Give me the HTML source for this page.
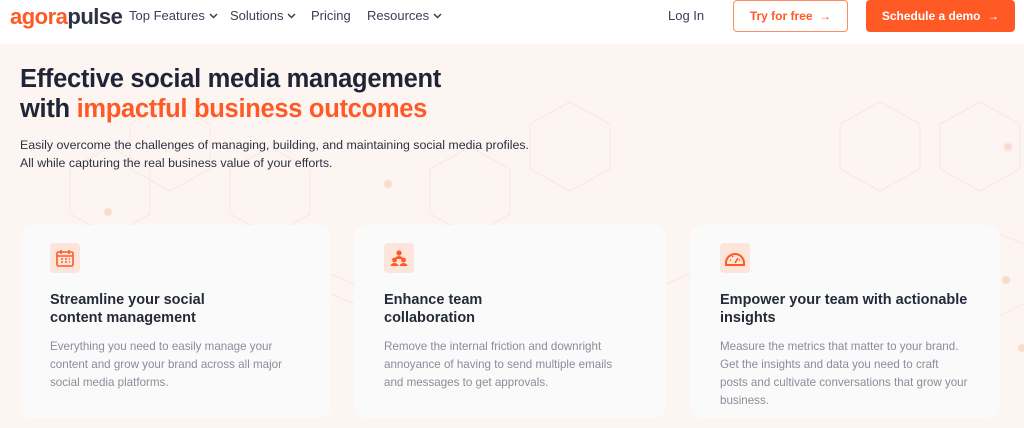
<!DOCTYPE html>
<html><head><meta charset="utf-8"><style>
*{margin:0;padding:0;box-sizing:border-box}
body{width:1024px;height:428px;overflow:hidden;background:#fdf5f2;font-family:"Liberation Sans",sans-serif;position:relative}
.hdr{position:absolute;left:0;top:0;width:1024px;height:44px;background:#fff}
.logo{position:absolute;left:10px;top:4px;font-size:22px;font-weight:bold;letter-spacing:-0.5px}
.nav{position:absolute;top:8px;font-size:13px;color:#3a3f55}
.nav svg{margin-left:4px;vertical-align:1px}
.btn{position:absolute;top:0;height:32px;border-radius:4px;font-size:12px;font-weight:bold;display:flex;align-items:center;justify-content:center}
h1{position:absolute;left:20px;top:64px;font-size:25.5px;line-height:30px;color:#1f2537;font-weight:bold;letter-spacing:-0.3px}
.p{position:absolute;left:20px;top:136px;font-size:12.4px;line-height:18px;color:#2d3142}
.card{position:absolute;top:225px;height:193px;background:#fafafa;border-radius:12px}
.ic{position:absolute;left:30px;top:18px;width:30px;height:30px;background:#fde5db;border-radius:4px;display:flex;align-items:center;justify-content:center}
.ct{position:absolute;left:30px;top:66px;font-size:14.5px;line-height:18px;font-weight:bold;color:#252a3a}
.cd{position:absolute;left:30px;top:113px;font-size:11.6px;line-height:18px;color:#8a8d9a}
</style></head><body>
<svg style="position:absolute;left:0;top:44px" width="1024" height="384" fill="none" stroke="#fae6de" stroke-width="1">
<path d="M130 80 L170 58 L210 80 L210 125 L170 147 L130 125Z M230 125 L270 103 L310 125 L310 170 L270 192 L230 170Z M430 125 L470 103 L510 125 L510 170 L470 192 L430 170Z M530 80 L570 58 L610 80 L610 125 L570 147 L530 125Z M70 125 L110 103 L150 125 L150 170 L110 192 L70 170Z M840 80 L880 58 L920 80 L920 125 L880 147 L840 125Z M940 80 L980 58 L1020 80 L1020 125 L980 147 L940 125Z M940 300 L1024 260 M331 230 L354 240 M331 250 L354 260 M666 240 L690 230 M1000 190 L1024 200"/>
<circle cx="108" cy="168" r="4" fill="#f9dccf"/><circle cx="388" cy="140" r="4" fill="#f9dccf"/><circle cx="1008" cy="103" r="4" fill="#f9dccf"/><circle cx="1006" cy="236" r="4" fill="#f9dccf"/><circle cx="1022" cy="304" r="4" fill="#f9dccf"/>
</svg>
<div class="hdr">
<div class="logo"><span style="color:#ff5a26">agora</span><span style="color:#2d3142">pulse</span></div>
<div class="nav" style="left:129px">Top Features<svg width="9" height="6" viewBox="0 0 9 6" fill="none" stroke="#3a3f55" stroke-width="1.5"><path d="M1 1l3.5 3.5L8 1"/></svg></div>
<div class="nav" style="left:230px">Solutions<svg width="9" height="6" viewBox="0 0 9 6" fill="none" stroke="#3a3f55" stroke-width="1.5"><path d="M1 1l3.5 3.5L8 1"/></svg></div>
<div class="nav" style="left:311px">Pricing</div>
<div class="nav" style="left:367px">Resources<svg width="9" height="6" viewBox="0 0 9 6" fill="none" stroke="#3a3f55" stroke-width="1.5"><path d="M1 1l3.5 3.5L8 1"/></svg></div>
<div class="nav" style="left:668px">Log In</div>
<div class="btn" style="left:733px;width:115px;border:1px solid #ff8a63;color:#ff5a26">Try for free &nbsp;→</div>
<div class="btn" style="left:866px;width:149px;background:#ff5a26;color:#fff">Schedule a demo &nbsp;→</div>
</div>
<h1>Effective social media management<br>with <span style="color:#ff5a26">impactful business outcomes</span></h1>
<div class="p">Easily overcome the challenges of managing, building, and maintaining social media profiles.<br>All while capturing the real business value of your efforts.</div>
<div class="card" style="left:20px;width:311px">
<div class="ic"><svg width="20" height="20" viewBox="0 0 20 20" fill="none" stroke="#ff5a26" stroke-width="1.6"><rect x="2" y="4" width="16" height="14" rx="1.5"/><path d="M2 8h16M6 2v4M14 2v4M6 11h2M10 11h2M14 11h1M6 14h2M10 14h2M14 14h1"/></svg></div>
<div class="ct">Streamline your social<br>content management</div>
<div class="cd">Everything you need to easily manage your<br>content and grow your brand across all major<br>social media platforms.</div></div>
<div class="card" style="left:354px;width:312px">
<div class="ic"><svg width="20" height="20" viewBox="0 0 20 20" fill="#ff5a26"><circle cx="10" cy="5" r="2.6"/><path d="M6 11a4 3 0 0 1 8 0z"/><circle cx="5.5" cy="12" r="2.4"/><circle cx="14.5" cy="12" r="2.4"/><path d="M1.5 18a4 3 0 0 1 8 0zM10.5 18a4 3 0 0 1 8 0z"/></svg></div>
<div class="ct">Enhance team<br>collaboration</div>
<div class="cd">Remove the internal friction and downright<br>annoyance of having to send multiple emails<br>and messages to get approvals.</div></div>
<div class="card" style="left:690px;width:310px">
<div class="ic"><svg width="22" height="20" viewBox="0 0 22 20" fill="none" stroke="#ff5a26" stroke-width="2"><path d="M2 15a9 9 0 0 1 18 0v2H2z"/><path d="M11 15l3-5M6 12h1M15 12h1M8 8l1 1M11 6v1" stroke-width="1.6"/></svg></div>
<div class="ct">Empower your team with actionable<br>insights</div>
<div class="cd">Measure the metrics that matter to your brand.<br>Get the insights and data you need to craft<br>posts and cultivate conversations that grow your<br>business.</div></div>
</body></html>
